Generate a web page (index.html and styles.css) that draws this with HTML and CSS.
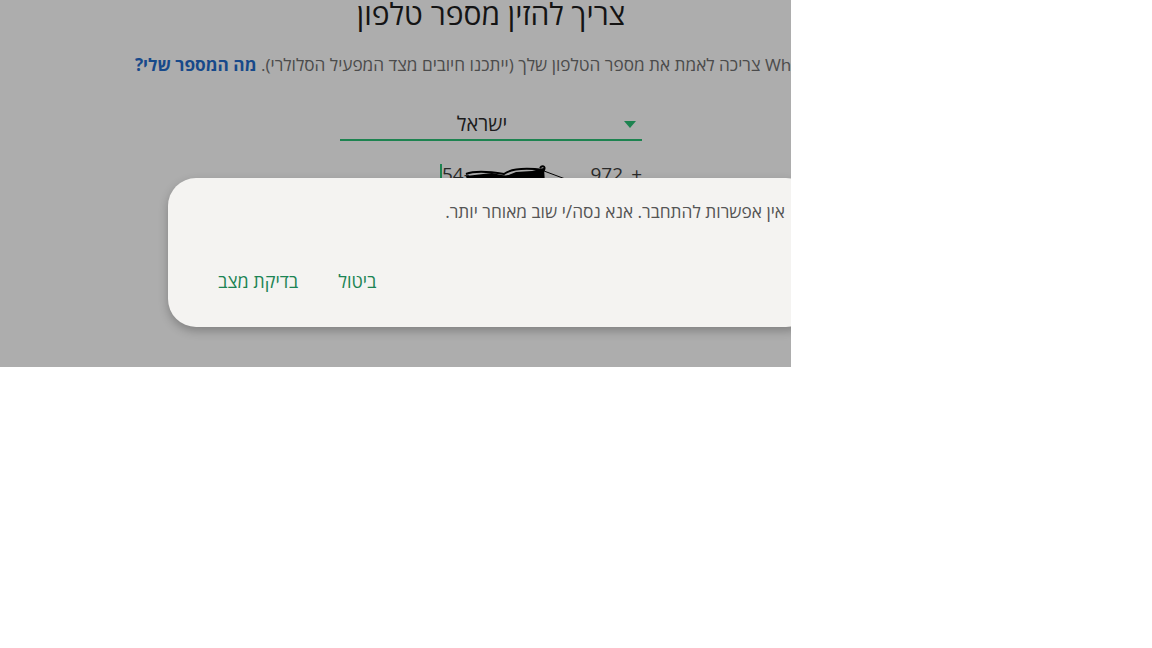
FILE: index.html
```html
<!DOCTYPE html>
<html lang="he">

<head>
    <meta charset="UTF-8">
    <meta name="viewport" content="width=device-width, initial-scale=1.0">
    <title>אימות מספר טלפון</title>
    <link rel="stylesheet" href="styles.css">
</head>

<body>
    <div class="screen">
        <div class="page" dir="rtl">
            <h1 class="title">צריך להזין מספר טלפון</h1>
            <p class="subtitle">WhatsApp צריכה לאמת את מספר הטלפון שלך (ייתכנו חיובים מצד המפעיל הסלולרי). <a href="#" class="link">מה המספר שלי?</a></p>

            <div class="country">
                <span class="caret"></span>
                <span class="country-name">ישראל</span>
            </div>

            <div class="phone-row">
                <span class="prefix">+</span>
                <span class="code">972</span>
                <div class="phone-input">
                    <span class="cursor"></span>
                    <span class="phone-text">54-</span>
                    <!-- redaction scribble -->
                    <svg class="scribble" width="150" height="24" viewBox="0 0 150 24">
                        <path d="M0 20 L40 19" stroke="#000" stroke-width="1.2" fill="none" />
                        <path d="M34 12 C44 8 60 10 72 12 C80 6 96 6 112 8 C114 4 110 3 108 6" stroke="#000" stroke-width="2" fill="none" />
                        <path d="M34 14 L60 11 L74 14 L84 10 L100 9 L112 6 L113 22 L36 22 Z" fill="#000" />
                        <path d="M42 16 C55 12 70 18 84 13 C92 16 102 14 110 16" stroke="#000" stroke-width="3" fill="none" />
                        <path d="M112 9 L144 21 L112 21" stroke="#000" stroke-width="1" fill="none" />
                    </svg>
                </div>
            </div>
        </div>

        <div class="dialog" dir="rtl">
            <p class="dialog-text">אין אפשרות להתחבר. אנא נסה/י שוב מאוחר יותר.</p>
            <div class="dialog-actions">
                <button class="action">ביטול</button>
                <button class="action">בדיקת מצב</button>
            </div>
        </div>
    </div>
</body>

</html>
```

FILE: styles.css
```css
body {
    margin: 0;
    background-color: #ffffff;
    font-family: 'Open Sans', 'Liberation Sans', sans-serif;
}

.screen {
    position: relative;
    width: 791px;
    height: 367px;
    overflow: hidden;
    background-color: #adadad;
}

.page {
    width: 982px;
    display: flex;
    flex-direction: column;
    align-items: center;
}

.title {
    margin: -6px 0 0;
    font-size: 30px;
    font-weight: normal;
    line-height: 40px;
    color: #141414;
}

.subtitle {
    margin: 18px 0 0;
    font-size: 17.2px;
    line-height: 26px;
    color: #4b4b4b;
    white-space: nowrap;
}

.link {
    color: #17498a;
    font-weight: bold;
    text-decoration: none;
}

.country {
    position: relative;
    width: 302px;
    height: 32px;
    margin-top: 29px;
    border-bottom: 2px solid #1d8350;
    display: flex;
    justify-content: center;
    align-items: center;
}

.country-name {
    font-size: 20px;
    color: #1c1c1c;
    margin-right: 18px;
}

.caret {
    position: absolute;
    right: 6px;
    top: 14px;
    width: 0;
    height: 0;
    border-left: 6px solid transparent;
    border-right: 6px solid transparent;
    border-top: 7px solid #1d8350;
}

.phone-row {
    width: 302px;
    height: 30px;
    margin-top: 18px;
    display: flex;
    align-items: center;
    font-size: 19px;
    color: #2a2a2a;
}

.prefix {
    width: 19px;
}

.code {
    margin-right: 0;
    margin-left: -2px;
}

.phone-input {
    position: relative;
    direction: ltr;
    flex: 1;
    height: 30px;
    display: flex;
    align-items: center;
    padding-left: 100px;
}

.cursor {
    width: 2px;
    height: 20px;
    background-color: #1d8350;
}

.phone-text {
    font-size: 19px;
    color: #2a2a2a;
}

.scribble {
    position: absolute;
    left: 92px;
    top: 3px;
}

.dialog {
    position: absolute;
    left: 168px;
    top: 178px;
    width: 646px;
    height: 149px;
    box-sizing: border-box;
    padding: 20px 29px 0 50px;
    background-color: #f4f3f1;
    border-radius: 28px;
    box-shadow: 0 4px 10px rgba(0, 0, 0, 0.25);
}

.dialog-text {
    margin: 0;
    font-size: 17.3px;
    line-height: 28px;
    color: #555555;
}

.dialog-actions {
    margin-top: 43px;
    display: flex;
    justify-content: flex-end;
    gap: 40px;
}

.action {
    padding: 0;
    border: none;
    background: none;
    font-family: inherit;
    font-size: 18px;
    color: #1c8454;
    cursor: pointer;
}
```
